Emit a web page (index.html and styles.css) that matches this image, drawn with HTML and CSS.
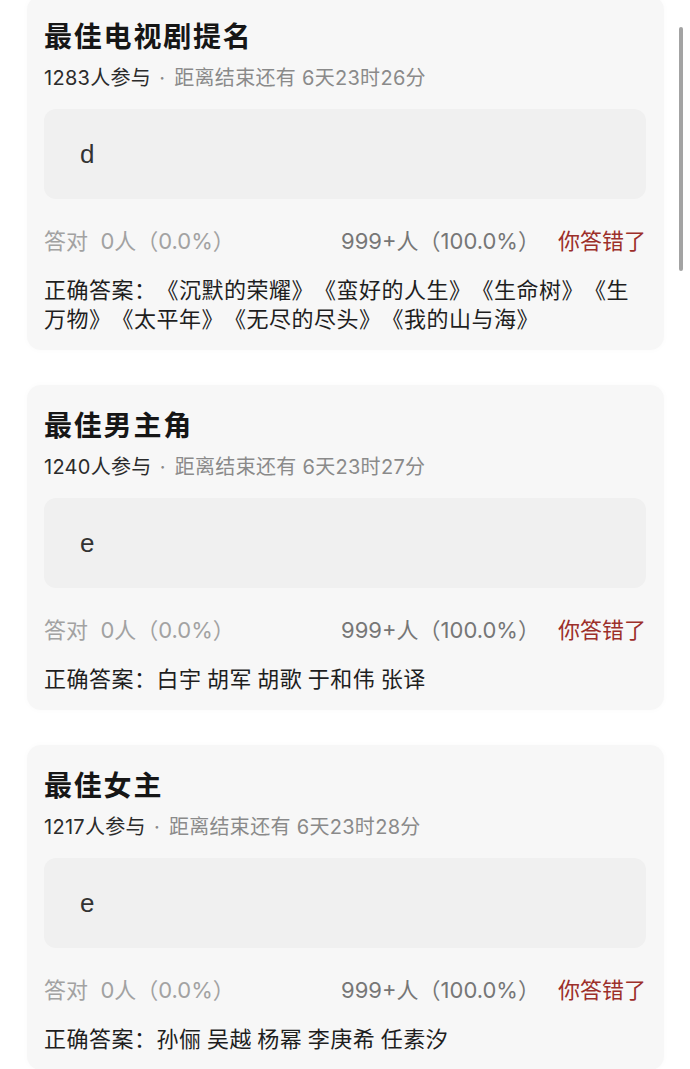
FILE: index.html
```html
<!DOCTYPE html>
<html lang="zh">

<head>
  <meta charset="UTF-8" />
  <meta name="viewport" content="width=device-width, initial-scale=1.0" />
  <title>竞猜结果</title>
  <link rel="stylesheet" href="styles.css">
</head>

<body>

  <div class="scrollbar"></div>

  <div class="quiz-list">

    <!-- 最佳电视剧提名 -->
    <div class="quiz-card">
      <h2 class="quiz-title">最佳电视剧提名</h2>
      <p class="quiz-meta"><span class="count">1283人参与</span><span class="dot">·</span>距离结束还有 6天23时26分</p>
      <div class="my-answer">d</div>
      <div class="quiz-stats">
        <span class="right-count">答对&nbsp; 0人（0.0%）</span>
        <span class="wrong-count">999+人（100.0%）<span class="result">你答错了</span></span>
      </div>
      <p class="correct">正确答案：《沉默的荣耀》《蛮好的人生》《生命树》《生万物》《太平年》《无尽的尽头》《我的山与海》</p>
    </div>

    <!-- 最佳男主角 -->
    <div class="quiz-card">
      <h2 class="quiz-title">最佳男主角</h2>
      <p class="quiz-meta"><span class="count">1240人参与</span><span class="dot">·</span>距离结束还有 6天23时27分</p>
      <div class="my-answer">e</div>
      <div class="quiz-stats">
        <span class="right-count">答对&nbsp; 0人（0.0%）</span>
        <span class="wrong-count">999+人（100.0%）<span class="result">你答错了</span></span>
      </div>
      <p class="correct">正确答案：白宇 胡军 胡歌 于和伟 张译</p>
    </div>

    <!-- 最佳女主 -->
    <div class="quiz-card">
      <h2 class="quiz-title">最佳女主</h2>
      <p class="quiz-meta"><span class="count">1217人参与</span><span class="dot">·</span>距离结束还有 6天23时28分</p>
      <div class="my-answer">e</div>
      <div class="quiz-stats">
        <span class="right-count">答对&nbsp; 0人（0.0%）</span>
        <span class="wrong-count">999+人（100.0%）<span class="result">你答错了</span></span>
      </div>
      <p class="correct">正确答案：孙俪 吴越 杨幂 李庚希 任素汐</p>
    </div>

  </div>

</body>

</html>
```

FILE: styles.css
```css
body {
  font-family: "Noto Sans CJK SC", "Noto Sans", sans-serif;
  background-color: #ffffff;
  margin: 0;
  padding: 0;
  color: #1a1a1a;
  text-spacing-trim: space-all;
}

/* fake scroll indicator on the right */
.scrollbar {
  position: fixed;
  top: 27px;
  right: 7px;
  width: 4px;
  height: 244px;
  border-radius: 2px;
  background-color: #a3a3a3;
}

.quiz-list {
  display: flex;
  flex-direction: column;
  gap: 35px;
  margin-top: -4px;
  padding: 0 26px 0 27px;
}

.quiz-card {
  background-color: #f7f7f7;
  border-radius: 14px;
  padding: 21px 18px 18px 17px;
  box-shadow: 0 0 6px rgba(0, 0, 0, 0.025);
}

.quiz-title {
  margin: 0;
  font-size: 28px;
  line-height: 36px;
  font-weight: 700;
  letter-spacing: 1.8px;
  color: #161616;
}

.quiz-meta {
  margin: 11px 0 0;
  font-family: "Inter", "Noto Sans CJK SC", sans-serif;
  font-size: 20px;
  line-height: 28px;
  letter-spacing: 0.3px;
  color: #8a8a8a;
}

.quiz-meta .count {
  color: #2b2b2b;
}

.quiz-meta .dot {
  margin: 0 9px 0 8px;
}

.my-answer {
  margin-top: 17px;
  height: 90px;
  display: flex;
  align-items: center;
  padding-left: 36px;
  border-radius: 12px;
  background-color: #f0f0f0;
  font-family: "Liberation Sans", sans-serif;
  font-size: 26px;
  color: #333;
}

.quiz-stats {
  margin-top: 27px;
  display: flex;
  justify-content: space-between;
  font-family: "Inter", "Noto Sans CJK SC", sans-serif;
  font-size: 22px;
  line-height: 30px;
}

.right-count {
  color: #a2a2a2;
}

.wrong-count {
  color: #767676;
}

.result {
  margin-left: 18px;
  color: #9c2f2a;
}

.correct {
  margin: 18px 0 0;
  font-size: 22px;
  letter-spacing: 0.5px;
  line-height: 29px;
  color: #1e1e1e;
}
```
